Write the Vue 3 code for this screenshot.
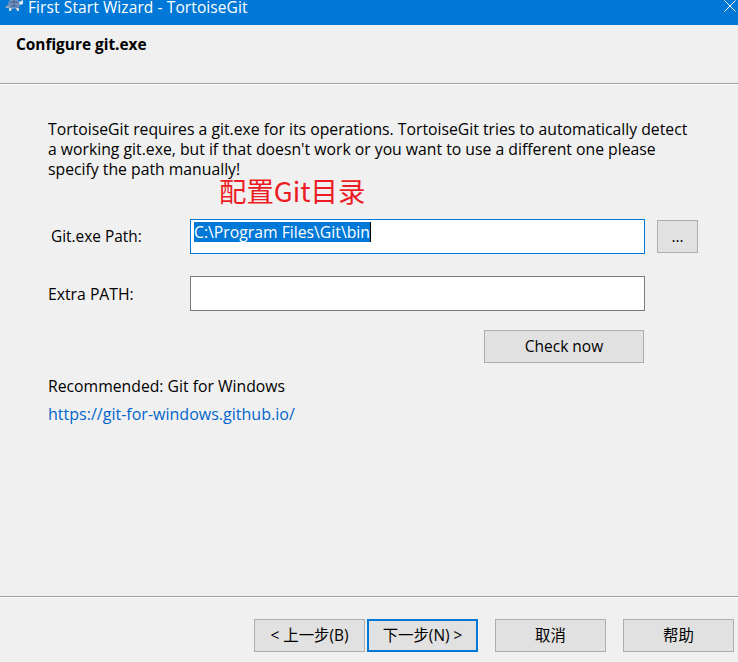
<script setup>
const actions = [
  { label: '< 上一步(B)', cls: 'back' },
  { label: '下一步(N) >', cls: 'next' },
  { label: '取消', cls: 'cancel' },
  { label: '帮助', cls: 'help' }
]
</script>

<template>
  <div class="wizard">
    <div class="titlebar">
      <svg class="logo" width="20" height="12" viewBox="0 0 20 12">
        <path d="M1 8 L4 5 L6 8 Z" fill="#9fb0c4" />
        <ellipse cx="10" cy="4" rx="6" ry="5" fill="#6f8fc0" />
        <path d="M6 3 L10 1 L14 3 M7 6 L13 6 M10 1 L10 6" stroke="#34507c" stroke-width="0.8" fill="none" />
        <path d="M5 8 L8 8 L7 11 L5 11 Z M12 8 L15 8 L15 11 L13 11 Z" fill="#d5dade" />
        <path d="M15 2 L19 0 L19 4 L16 5 Z" fill="#e6eaee" />
      </svg>
      <span class="title">First Start Wizard - TortoiseGit</span>
      <svg class="close" width="12" height="12" viewBox="0 0 12 12">
        <path d="M0.5 0.5 L11.5 11.5 M11.5 0.5 L0.5 11.5" stroke="#fff" stroke-width="1" fill="none" />
      </svg>
    </div>

    <div class="header">Configure git.exe</div>

    <div class="body">
      <p class="intro">TortoiseGit requires a git.exe for its operations. TortoiseGit tries to automatically detect<br />a working git.exe, but if that doesn't work or you want to use a different one please<br />specify the path manually!</p>
      <div class="note">配置Git目录</div>

      <div class="row row-path">
        <label class="label label-path">Git.exe Path:</label>
        <div class="field focused"><span class="selected">C:\Program Files\Git\bin</span><i class="caret"></i></div>
        <button class="btn browse">...</button>
      </div>
      <div class="row row-extra">
        <label class="label">Extra PATH:</label>
        <div class="field"></div>
      </div>
      <div class="check-row">
        <button class="btn check">Check now</button>
      </div>

      <div class="rec">Recommended: Git for Windows</div>
      <a class="link">https://git-for-windows.github.io/</a>
    </div>

    <div class="footer">
      <button v-for="a in actions" :key="a.cls" class="btn" :class="a.cls">{{ a.label }}</button>
    </div>
  </div>
</template>

<style>
html, body { margin: 0; background: #f0f0f0; }
</style>

<style scoped>
.wizard {
  width: 738px;
  height: 662px;
  display: flex;
  flex-direction: column;
  overflow: hidden;
  background: #f0f0f0;
  color: #000;
  font-family: "Open Sans", "Noto Sans CJK SC", sans-serif;
  font-size: 15.75px;
}
.titlebar {
  height: 25px;
  flex: none;
  background: #0078d7;
  color: #fff;
  display: flex;
  align-items: flex-start;
  box-sizing: border-box;
  padding-left: 4px;
}
.title {
  margin-left: 4px;
  font-size: 15.5px;
  line-height: 14px;
  letter-spacing: 0.1px;
}
.close { margin-left: auto; margin-right: 2px; }
.header {
  height: 59px;
  flex: none;
  box-sizing: border-box;
  padding: 10px 0 0 16px;
  font-weight: 700;
  font-size: 15.4px;
  line-height: 20px;
  border-bottom: 1px solid #a0a0a0;
}
.body {
  flex: 1;
  border-top: 1px solid #fff;
  padding: 34px 0 0 48px;
}
.intro {
  margin: 0;
  line-height: 20px;
  white-space: nowrap;
}
.note {
  height: 40px;
  padding-left: 171px;
  color: #ed1c24;
  font-size: 27.4px;
  line-height: 22px;
  font-family: "Noto Sans CJK SC", "Noto Sans", sans-serif;
}
.row {
  display: flex;
  align-items: center;
}
.row-extra { margin-top: 22px; }
.label {
  width: 142px;
  flex: none;
  line-height: 20px;
}
.label-path { padding-left: 3px; width: 139px; font-size: 15.4px; }
.field {
  width: 455px;
  height: 35px;
  box-sizing: border-box;
  background: #fff;
  border: 1px solid #7a7a7a;
  padding: 2px 0 0 3px;
  display: flex;
  align-items: flex-start;
}
.field.focused { border-color: #0078d7; }
.selected {
  background: #0078d7;
  color: #fff;
  line-height: 20px;
  white-space: nowrap;
}
.caret {
  display: block;
  width: 1px;
  height: 20px;
  background: #000;
}
.btn {
  box-sizing: border-box;
  margin: 0;
  padding: 0 0 2px;
  background: #e1e1e1;
  border: 1px solid #adadad;
  color: #000;
  font: inherit;
  font-size: 15.5px;
  white-space: nowrap;
}
.browse { width: 41px; height: 33px; margin-left: 12px; }
.check-row { display: flex; margin-top: 19px; padding-left: 436px; }
.check { width: 160px; height: 33px; }
.rec { margin-top: 13px; line-height: 20px; }
.link { display: block; margin-top: 8px; line-height: 20px; color: #0066cc; font-size: 16.05px; }
.footer {
  height: 66px;
  flex: none;
  box-sizing: border-box;
  border-top: 1px solid #a0a0a0;
  box-shadow: inset 0 1px 0 #fff;
  padding: 22px 0 0 254px;
  display: flex;
  align-items: flex-start;
}
.footer .btn { width: 111px; height: 33px; font-size: 15.4px; }
.next { margin-left: 2px; border: 2px solid #0078d7 !important; }
.cancel { margin-left: 17px; }
.help { margin-left: 17px; }
</style>
